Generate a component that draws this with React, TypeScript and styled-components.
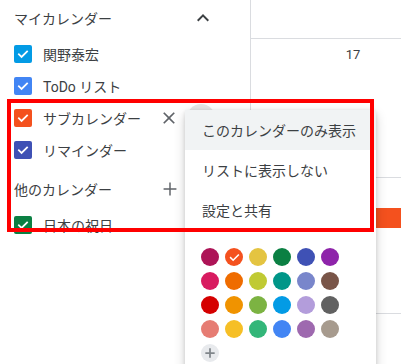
import React from "react";
import styled, { createGlobalStyle } from "styled-components";

const GlobalStyle = createGlobalStyle`
  html, body {
    margin: 0;
    padding: 0;
    background: #ffffff;
  }
  body {
    font-family: Roboto, "Noto Sans CJK JP", "Noto Sans", sans-serif;
    color: #3c4043;
  }
`;

const myCalendars = [
  { label: "関野泰宏", color: "#039be5" },
  { label: "ToDo リスト", color: "#4285f4" },
  { label: "サブカレンダー", color: "#f4511e", active: true },
  { label: "リマインダー", color: "#3f51b5" },
];

const palette = [
  ["#ad1457", "#f4511e", "#e4c441", "#0b8043", "#3f51b5", "#8e24aa"],
  ["#d81b60", "#ef6c00", "#c0ca33", "#009688", "#7986cb", "#795548"],
  ["#d50000", "#f09300", "#7cb342", "#039be5", "#b39ddb", "#616161"],
  ["#e67c73", "#f6bf26", "#33b679", "#4285f4", "#9e69af", "#a79b8e"],
];

const CheckMark = ({ size = 14 }: { size?: number }) => (
  <svg width={size} height={size} viewBox="0 0 24 24">
    <path
      d="M5 12.5l4.5 4.5L19 7.5"
      fill="none"
      stroke="#fff"
      strokeWidth="3"
      strokeLinecap="square"
    />
  </svg>
);

const App = () => {
  return (
    <>
      <GlobalStyle />
      <Page>
        <Sidebar>
          <SectionHeader>
            <SectionTitle>マイカレンダー</SectionTitle>
            <IconSlot $right={35}>
              <svg width="24" height="24" viewBox="0 0 24 24">
                <path d="M12 8l-6 6 1.41 1.41L12 10.83l4.59 4.58L18 14z" fill="#3c4043" />
              </svg>
            </IconSlot>
          </SectionHeader>

          {myCalendars.map((cal) => (
            <CalRow key={cal.label}>
              <Checkbox $color={cal.color}>
                <CheckMark />
              </Checkbox>
              <CalLabel>{cal.label}</CalLabel>
              {cal.active && (
                <>
                  <RowButton>
                    <svg width="20" height="20" viewBox="0 0 24 24">
                      <path
                        d="M19 6.41L17.59 5 12 10.59 6.41 5 5 6.41 10.59 12 5 17.59 6.41 19 12 13.41 17.59 19 19 17.59 13.41 12z"
                        fill="#5f6368"
                      />
                    </svg>
                  </RowButton>
                  <MoreButton />
                </>
              )}
            </CalRow>
          ))}

          <SectionHeader $spaced>
            <SectionTitle>他のカレンダー</SectionTitle>
            <IconSlot $right={69}>
              <svg width="22" height="22" viewBox="0 0 24 24">
                <path d="M19 12.8h-6.2V19h-1.6v-6.2H5v-1.6h6.2V5h1.6v6.2H19z" fill="#5f6368" />
              </svg>
            </IconSlot>
          </SectionHeader>

          <CalRow>
            <Checkbox $color="#0b8043">
              <CheckMark />
            </Checkbox>
            <CalLabel>日本の祝日</CalLabel>
          </CalRow>
        </Sidebar>

        <Main>
          <GridHeader />
          <WeekRow $height={132}>
            <DateNum>17</DateNum>
          </WeekRow>
          <WeekRow $height={129}>
            <DateNum />
            <EventChip />
          </WeekRow>
          <WeekRow $height={100} />
        </Main>

        <Menu>
          <MenuItem $hover>このカレンダーのみ表示</MenuItem>
          <MenuItem>リストに表示しない</MenuItem>
          <MenuItem>設定と共有</MenuItem>
          <Palette>
            {palette.flat().map((c, i) => (
              <Swatch key={c + i} $color={c}>
                {i === 1 && <CheckMark size={13} />}
              </Swatch>
            ))}
            <AddSwatch>
              <svg width="14" height="14" viewBox="0 0 24 24">
                <path d="M20 13.5h-6.5V20h-3v-6.5H4v-3h6.5V4h3v6.5H20z" fill="#80868b" />
              </svg>
            </AddSwatch>
          </Palette>
        </Menu>

        <Highlight />
      </Page>
    </>
  );
};

export default App;

const Page = styled.div`
  position: relative;
  display: flex;
  width: 401px;
  height: 364px;
  overflow: hidden;
  background: #fff;
`;

const Sidebar = styled.aside`
  width: 250px;
  flex-shrink: 0;
`;

const SectionHeader = styled.div<{ $spaced?: boolean }>`
  position: relative;
  display: flex;
  align-items: center;
  height: 36px;
  padding-left: 14px;
  margin-top: ${(p) => (p.$spaced ? "5px" : "0")};
  margin-bottom: 2px;
`;

const SectionTitle = styled.span`
  font-size: 14px;
  color: #3c4043;
`;

const IconSlot = styled.span<{ $right: number }>`
  display: flex;
  align-items: center;
  margin-left: auto;
  margin-right: ${(p) => p.$right}px;
`;

const CalRow = styled.div`
  display: flex;
  align-items: center;
  height: 32px;
  padding-left: 14px;
`;

const Checkbox = styled.span<{ $color: string }>`
  display: flex;
  align-items: center;
  justify-content: center;
  width: 18px;
  height: 18px;
  border-radius: 2px;
  background: ${(p) => p.$color};
  flex-shrink: 0;
`;

const CalLabel = styled.span`
  margin-left: 11px;
  font-size: 14px;
  color: #3c4043;
  white-space: nowrap;
`;

const RowButton = styled.span`
  display: flex;
  align-items: center;
  justify-content: center;
  width: 24px;
  height: 24px;
  margin-left: auto;
`;

const MoreButton = styled.span`
  width: 28px;
  height: 28px;
  border-radius: 50%;
  background: #e6e6e6;
  margin-left: 6px;
  margin-right: 35px;
`;

const Main = styled.main`
  flex: 1;
  border-left: 1px solid #dadce0;
  overflow: hidden;
`;

const GridHeader = styled.div`
  height: 38px;
  border-bottom: 1px solid #dadce0;
`;

const WeekRow = styled.div<{ $height: number }>`
  height: ${(p) => p.$height}px;
  border-bottom: 1px solid #dadce0;
`;

const DateNum = styled.div`
  width: 204px;
  height: 20px;
  margin-top: 6px;
  margin-bottom: 4px;
  text-align: center;
  font-size: 13px;
  line-height: 20px;
  color: #3c4043;
`;

const EventChip = styled.div`
  height: 20px;
  margin-left: 2px;
  border-radius: 4px 0 0 4px;
  background: #f4511e;
`;

const Menu = styled.div`
  position: absolute;
  left: 185px;
  top: 110px;
  width: 191px;
  height: 290px;
  background: #fff;
  border-radius: 4px;
  box-shadow: 0 4px 12px rgba(0, 0, 0, 0.18), 0 1px 4px rgba(0, 0, 0, 0.12);
`;

const MenuItem = styled.div<{ $hover?: boolean }>`
  display: flex;
  align-items: center;
  height: 40px;
  padding-left: 17px;
  font-size: 14px;
  color: #3c4043;
  background: ${(p) => (p.$hover ? "#f1f3f4" : "transparent")};
  white-space: nowrap;
`;

const Palette = styled.div`
  display: grid;
  grid-template-columns: repeat(6, 18px);
  gap: 6px;
  padding: 18px 16px;
`;

const Swatch = styled.span<{ $color: string }>`
  display: flex;
  align-items: center;
  justify-content: center;
  width: 18px;
  height: 18px;
  border-radius: 50%;
  background: ${(p) => p.$color};
`;

const AddSwatch = styled.span`
  display: flex;
  align-items: center;
  justify-content: center;
  width: 18px;
  height: 18px;
  border-radius: 50%;
  background: #e8eaed;
`;

const Highlight = styled.div`
  position: absolute;
  left: 7px;
  top: 99px;
  width: 367px;
  height: 133px;
  box-sizing: border-box;
  border: 4px solid #ff0000;
  pointer-events: none;
`;
